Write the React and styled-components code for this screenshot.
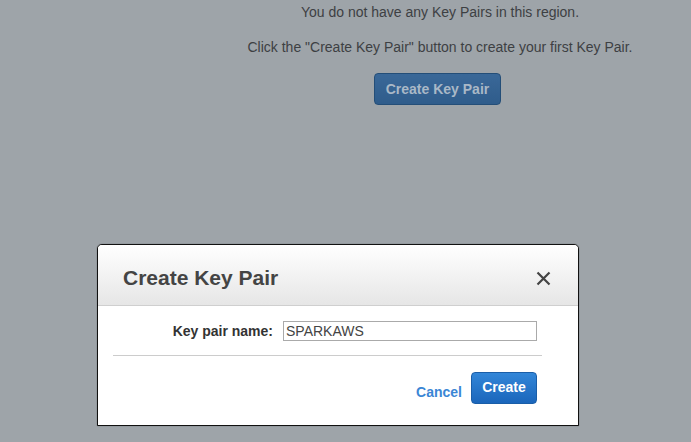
import React from "react";
import styled, { createGlobalStyle } from "styled-components";

const Global = createGlobalStyle`
  html, body { margin: 0; padding: 0; }
  body {
    width: 691px;
    height: 442px;
    overflow: hidden;
    background: #9ea4a9;
    font-family: "Liberation Sans", Arial, sans-serif;
  }
`;

const Page = styled.div`
  position: relative;
  width: 691px;
  height: 442px;
  background: #9ea4a9;
`;

const Empty = styled.div`
  margin-left: 189px;
  width: 502px;
  display: flex;
  flex-direction: column;
  align-items: center;
  padding-top: 4px;
  color: #3d4043;
  font-size: 14px;
`;

const Line = styled.p`
  margin: 0 0 ${(p) => p.$gap}px 0;
  line-height: 16px;
  white-space: nowrap;
`;

const BgButton = styled.div`
  margin-right: 5px;
  height: 30px;
  padding: 0 11px;
  display: flex;
  align-items: center;
  border: 1px solid #244e78;
  border-radius: 4px;
  background: linear-gradient(#3a6898, #2f5c8b);
  color: #a9b8c7;
  font-weight: bold;
  font-size: 14px;
`;

const Dialog = styled.div`
  position: absolute;
  left: 97px;
  top: 244px;
  width: 480px;
  background: #fff;
  border: 1px solid #111;
  border-radius: 5px 5px 0 0;
  box-shadow: 0 0 1px rgba(0, 0, 0, 0.6);
`;

const Header = styled.div`
  height: 60px;
  display: flex;
  align-items: center;
  justify-content: space-between;
  padding: 0 26px 0 25px;
  background: linear-gradient(#ffffff, #e6e6e6);
  border-bottom: 1px solid #cfcfcf;
  border-radius: 4px 4px 0 0;
`;

const Title = styled.h2`
  margin: 0;
  margin-top: 6px;
  font-size: 21px;
  font-weight: bold;
  color: #444;
`;

const Close = styled.div`
  margin-top: 6px;
  width: 18px;
  height: 18px;
  display: flex;
  align-items: center;
  justify-content: center;
`;

const Body = styled.div`
  padding: 15px 36px 21px 15px;
`;

const FormRow = styled.div`
  display: grid;
  grid-template-columns: 160px 254px;
  column-gap: 10px;
  align-items: center;
`;

const Label = styled.label`
  text-align: right;
  font-size: 14px;
  font-weight: bold;
  color: #333;
`;

const Input = styled.div`
  box-sizing: border-box;
  height: 20px;
  border: 1px solid #aaa;
  padding: 0 2px;
  font-size: 14px;
  line-height: 18px;
  color: #444;
`;

const Divider = styled.hr`
  margin: 14px 0 0 0;
  border: 0;
  border-top: 1px solid #ccc;
`;

const Footer = styled.div`
  display: flex;
  justify-content: flex-end;
  align-items: center;
  gap: 9px;
  padding: 16px 5px 0 0;
`;

const LinkBtn = styled.span`
  margin-top: 8px;
  font-size: 14px;
  font-weight: bold;
  color: #3a86d5;
`;

const Primary = styled.div`
  box-sizing: border-box;
  width: 66px;
  height: 32px;
  display: flex;
  align-items: center;
  justify-content: center;
  padding-bottom: 3px;
  border: 1px solid #1a5ea8;
  border-radius: 4px;
  background: linear-gradient(#3286d8, #1b66bb);
  color: #fff;
  font-size: 14px;
  font-weight: bold;
`;

export default function App() {
  return (
    <Page>
      <Global />
      <Empty>
        <Line $gap={19}>You do not have any Key Pairs in this region.</Line>
        <Line $gap={18}>Click the "Create Key Pair" button to create your first Key Pair.</Line>
        <BgButton>Create Key Pair</BgButton>
      </Empty>
      <Dialog>
        <Header>
          <Title>Create Key Pair</Title>
          <Close>
            <svg width="15" height="15" viewBox="0 0 15 15">
              <path d="M1.5 1.5 L13.5 13.5 M13.5 1.5 L1.5 13.5" stroke="#444" strokeWidth="2.2" />
            </svg>
          </Close>
        </Header>
        <Body>
          <FormRow>
            <Label>Key pair name:</Label>
            <Input>SPARKAWS</Input>
          </FormRow>
          <Divider />
          <Footer>
            <LinkBtn>Cancel</LinkBtn>
            <Primary>Create</Primary>
          </Footer>
        </Body>
      </Dialog>
    </Page>
  );
}
